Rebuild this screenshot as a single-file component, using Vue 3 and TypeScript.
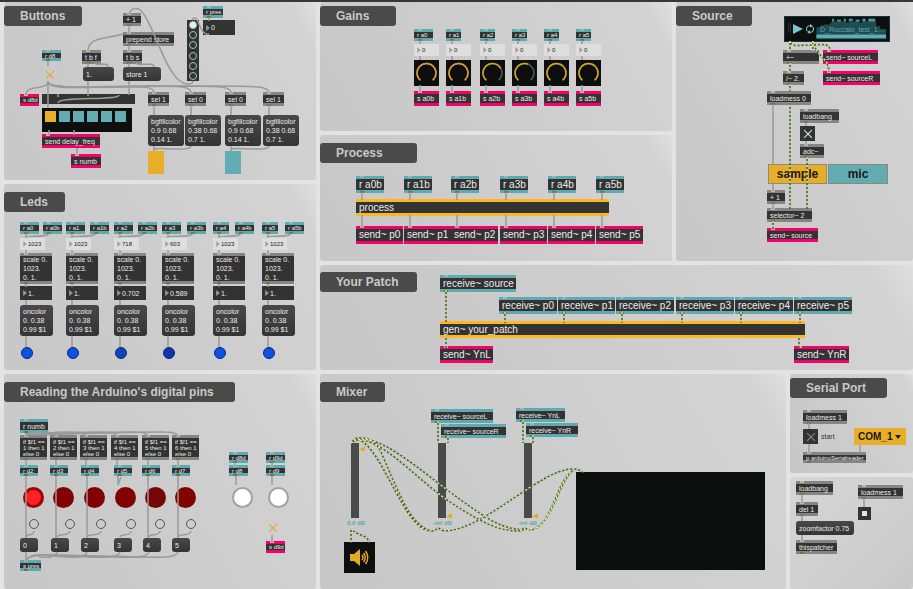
<script setup lang="ts">
import { reactive } from 'vue'

type Kind =
  | 'obj' | 'recv' | 'send' | 'code' | 'msg' | 'num' | 'numlight' | 'toggle' | 'cross' | 'square'
  | 'swatch' | 'led' | 'bang' | 'dial' | 'fader' | 'tab' | 'menu' | 'comment' | 'level'
  | 'bar' | 'matrix' | 'radio' | 'player' | 'speaker' | 'scope'

interface Node {
  k: Kind
  t: string
  x: number
  y: number
  w: number
  h: number
  tone: string
  v: number
}

interface Panel {
  id: string
  title: string
  titleWidth: number
  ox: number
  oy: number
  nodes: Node[]
  wires: string[]
  signals: string[]
}

const n = (k: Kind, t: string, x: number, y: number, w: number, h: number, tone = '', v = 0): Node =>
  ({ k, t, x, y, w, h, tone, v })

const six = [0, 1, 2, 3, 4, 5]
const line = (x: number, a: number, b: number) => `M${x} ${a}V${b}`

/* Buttons */
const colorMessage = ['bgfillcolor\n0.9 0.68\n0.14 1.', 'bgfillcolor\n0.38 0.68\n0.7 1.']
const selX = [148, 185, 225, 263]
const buttons: Panel = {
  id: 'buttons', title: 'Buttons', titleWidth: 78, ox: 4, oy: 2,
  nodes: [
    n('obj', '+ 1', 123, 13, 18, 13),
    n('obj', 'prepend store', 123, 32, 51, 14),
    n('obj', 't b f', 82, 50, 19, 14),
    n('obj', 't b s', 123, 50, 19, 14),
    n('msg', '1.', 83, 67, 31, 14),
    n('msg', 'store 1', 123, 67, 38, 14),
    n('recv', 'r d8', 42, 50, 19, 11, 'tiny'),
    n('cross', 'd8 toggle', 45, 70, 10, 10),
    n('send', 's d8d', 20, 94, 19, 12, 'tiny'),
    n('bar', '', 42, 94, 93, 10),
    n('matrix', '', 42, 108, 90, 24),
    n('send', 'send delay_freq', 42, 134, 58, 14),
    n('send', 's numb', 71, 154, 30, 14),
    ...selX.map((x, i) => n('obj', i === 0 || i === 3 ? 'sel 1' : 'sel 0', x, 92, 21, 14)),
    ...selX.map((x, i) => n('msg', colorMessage[i % 2], x, 115, 36, 31, 'multi')),
    n('swatch', '', 148, 151, 16, 23, 'gold'),
    n('swatch', '', 225, 151, 16, 23, 'teal'),
    n('recv', 'r pres', 203, 6, 20, 12, 'tiny'),
    n('num', '0', 203, 20, 32, 15),
    n('radio', '', 187, 20, 12, 61),
  ],
  wires: [
    'M129 14C131 8 138 6 143 13C156 30 168 84 188 84Q193 84 193 81',
    'M209 34C200 36 199 18 195 18Q193 18 192 20',
    line(209, 17, 21), line(129, 25, 33), line(129, 45, 51),
    line(129, 63, 67), line(129, 81, 95), line(88, 63, 67), line(88, 81, 96),
    'M136 63C138 67 154 61 154 67', 'M95 63C97 67 108 61 108 67',
    'M123 34C105 39 88 37 88 51',
    line(48, 61, 66), line(48, 81, 108),
    'M48 82C46 91 26 84 26 95',
    'M48 82C50 90 80 87 120 87C145 86 154 87 154 93',
    'M48 82C50 90 90 86 150 86C185 86 191 87 191 93',
    'M48 82C50 90 90 86 180 86C225 86 231 87 231 93',
    'M48 82C50 90 90 86 220 86C262 86 269 87 269 93',
    'M58 94V97M58 103C58 96 119 101 119 95',
    line(49, 130, 135), line(74, 130, 135), line(77, 148, 155),
    ...selX.map((x) => line(x + 6, 105, 115)),
    line(154, 146, 151), line(231, 146, 151),
    'M191 146C191 152 158 147 154 149', 'M269 146C269 152 235 147 231 149',
  ],
  signals: [],
}

/* Leds */
const ledX = [20, 66, 114, 162, 213, 262]
const ledBX = [43, 90, 138, 187, 235, 285]
const raw = ['1023', '1023', '718', '603', '1023', '1023']
const scaled = ['1.', '1.', '0.702', '0.589', '1.', '1.']
const blue = ['blue', 'blue', 'blue-mid', 'blue-low', 'blue', 'blue']
const leds: Panel = {
  id: 'leds', title: 'Leds', titleWidth: 61, ox: 4, oy: 184,
  nodes: six.flatMap((i) => [
    n('recv', `r a${i}`, ledX[i], 222, i > 3 ? 16 : 19, 12, 'tiny'),
    n('recv', `r a${i}b`, ledBX[i], 222, 19, 12, 'tiny'),
    n('numlight', raw[i], ledX[i], 238, 25, 12),
    n('obj', 'scale 0.\n1023.\n0. 1.', ledX[i], 253, 32, 31, 'multi'),
    n('num', scaled[i], ledX[i], 286, 32, 14),
    n('msg', 'oncolor\n0. 0.38\n0.99 $1', ledX[i], 305, 33, 31, 'multi'),
    n('led', '', ledX[i] + 1, 347, 12, 12, blue[i]),
  ]),
  wires: six.flatMap((i) => {
    const x = ledX[i] + 6
    return [
      line(x, 233, 238), line(x, 250, 254), line(x, 284, 287), line(x, 300, 305), line(x, 336, 347),
      `M${ledBX[i] + 6} 233C${ledBX[i] + 6} 238 ${x} 235 ${x} 237`,
    ]
  }),
  signals: [],
}

/* Arduino pins */
const ifX = [20, 50, 80, 111, 142, 172]
const pinX = [20, 50, 81, 114, 142, 172]
const bulbX = [33, 63, 94, 125, 155, 185]
const bangX = [34, 70, 101, 131, 160, 191]
const outX = [20, 51, 81, 114, 143, 172]
const pins: Panel = {
  id: 'pins', title: "Reading the Arduino's digital pins", titleWidth: 231, ox: 4, oy: 374,
  nodes: [
    n('recv', 'r numb', 20, 419, 28, 14),
    ...six.flatMap((i) => [
      n('obj', `if $f1 ==\n${i + 1} then 1\nelse 0`, ifX[i], 435, 27, 25, 'tiny multi'),
      n('recv', `r d${i + 2}`, pinX[i], 465, 18, 11, 'tiny'),
      n('led', '', bulbX[i] - 10, 487, 21, 21, i === 0 ? 'red-on' : i === 4 ? 'red-low' : 'red'),
      n('bang', `pin ${i + 2}`, bangX[i] - 5, 519, 10, 10),
      n('msg', String(i), outX[i], 538, 18, 14),
    ]),
    n('recv', 's pres', 20, 560, 21, 11, 'tiny'),
    n('recv', 'r d8d', 229, 452, 19, 11, 'tiny'),
    n('recv', 'r d8', 229, 465, 19, 11, 'tiny'),
    n('recv', 'r d9d', 266, 452, 19, 11, 'tiny'),
    n('recv', 'r d9', 266, 465, 19, 11, 'tiny'),
    n('led', '', 232, 487, 21, 21, 'white'),
    n('led', '', 268, 487, 21, 21, 'white'),
    n('cross', 'd9 toggle', 268, 523, 10, 10),
    n('send', 's d9d', 266, 541, 19, 12, 'tiny'),
  ],
  wires: [
    line(26, 433, 437),
    ...six.slice(1).map((i) => `M26 434C40 436 ${ifX[i] - 30} 431 ${ifX[i] - 8} 432Q${ifX[i] + 6} 432 ${ifX[i] + 6} 437`),
    ...six.map((i) => line(ifX[i] + 6, 459, 466)),
    ...[0, 1, 2, 4, 5].map((i) => line(pinX[i] + 6, 476, 538)),
    'M118 476V485L121 477',
    ...six.map((i) => `M${bangX[i]} 531C${bangX[i] - 1} 537 ${outX[i] + 8} 533 ${outX[i] + 6} 537`),
    line(26, 552, 561),
    ...six.slice(1).map((i) => `M${outX[i] + 6} 552C${outX[i] + 4} 561 ${outX[i] - 24} 556 44 555Q28 555 27 560`),
    line(235, 462, 466), line(272, 462, 466), line(236, 476, 485), line(272, 476, 485), line(272, 535, 542),
  ],
  signals: [],
}

/* Gains */
const gainX = [414, 446, 480, 512, 544, 576]
const gainValue = [1, 1, 0.72, 0.58, 1, 1]
const gains: Panel = {
  id: 'gains', title: 'Gains', titleWidth: 76, ox: 320, oy: 2,
  nodes: six.flatMap((i) => [
    n('recv', `r a${i}`, gainX[i], 29, i === 0 ? 19 : 15, 12, 'tiny'),
    n('numlight', '0', gainX[i], 44, 25, 12),
    n('dial', `gain ${i}`, gainX[i], 60, 25, 26, '', gainValue[i]),
    n('send', `s a${i}b`, gainX[i], 91, 25, 15),
  ]),
  wires: six.flatMap((i) => [line(gainX[i] + 6, 40, 44), line(gainX[i] + 6, 56, 60), line(gainX[i] + 6, 85, 92)]),
  signals: [],
}

/* Process */
const procX = [356, 404, 451, 500, 548, 596]
const process: Panel = {
  id: 'process', title: 'Process', titleWidth: 97, ox: 320, oy: 135,
  nodes: [
    ...six.map((i) => n('recv', `r a${i}b`, procX[i], 176, 28, 17, 'large')),
    n('code', 'process', 356, 199, 253, 17, 'large'),
    ...six.map((i) => n('send', `send~ p${i}`, procX[i], 226, 47, 18, 'large')),
  ],
  wires: six.flatMap((i) => [line(procX[i] + 6, 192, 200), line(procX[i] + 6, 215, 228)]),
  signals: [],
}

/* Your Patch */
const recvX = [499, 558, 616, 676, 735, 794]
const patch: Panel = {
  id: 'patch', title: 'Your Patch', titleWidth: 97, ox: 320, oy: 265,
  nodes: [
    n('recv', 'receive~ source', 440, 275, 76, 17, 'large'),
    ...six.map((i) => n('recv', `receive~ p${i}`, recvX[i], 297, i === 1 ? 57 : 58, 17, 'large')),
    n('code', 'gen~ your_patch', 440, 321, 365, 17, 'large'),
    n('send', 'send~ YnL', 440, 346, 53, 17, 'large'),
    n('send', 'send~ YnR', 794, 346, 55, 17, 'large'),
  ],
  wires: [],
  signals: [line(446, 290, 322), ...recvX.map((x) => line(x + 6, 312, 323)), line(446, 336, 348), line(799, 336, 348)],
}

/* Source */
const source: Panel = {
  id: 'source', title: 'Source', titleWidth: 76, ox: 676, oy: 2,
  nodes: [
    n('player', 'D_Roccato_test_1...', 784, 16, 106, 26),
    n('obj', '+~', 783, 50, 36, 14),
    n('send', 'send~ sourceL', 823, 50, 55, 14),
    n('obj', '/~ 2.', 783, 71, 21, 14),
    n('send', 'send~ sourceR', 823, 71, 57, 14),
    n('obj', 'loadmess 0', 767, 91, 44, 14),
    n('obj', 'loadbang', 800, 109, 39, 14),
    n('toggle', 'adc toggle', 800, 126, 15, 15),
    n('obj', 'adc~', 800, 144, 24, 14),
    n('tab', 'sample', 768, 164, 59, 20, 'gold'),
    n('tab', 'mic', 828, 164, 60, 20, 'teal'),
    n('obj', '+ 1', 767, 190, 18, 14),
    n('obj', 'selector~ 2', 767, 208, 45, 14),
    n('send', 'send~ source', 767, 228, 51, 14),
  ],
  wires: [line(773, 104, 164), line(773, 184, 191), line(773, 203, 209), line(806, 122, 126), line(806, 141, 145)],
  signals: [
    line(790, 41, 51), line(790, 63, 72), line(790, 84, 91), line(790, 105, 209), line(813, 41, 51),
    'M790 41C791 48 800 45 812 45C824 44 830 43 830 51',
    'M814 42C814 56 829 56 829 72',
    line(807, 157, 209), line(773, 221, 229),
  ],
}

/* Mixer */
const mixer: Panel = {
  id: 'mixer', title: 'Mixer', titleWidth: 65, ox: 320, oy: 374,
  nodes: [
    n('recv', 'receive~ sourceL', 431, 409, 62, 14),
    n('recv', 'receive~ sourceR', 441, 424, 65, 14),
    n('recv', 'receive~ YnL', 516, 408, 49, 14),
    n('recv', 'receive~ YnR', 526, 423, 52, 14),
    n('fader', 'output level', 351, 443, 14, 75, '', 0.9),
    n('fader', 'source level', 438, 443, 14, 75, '', 0.01),
    n('fader', 'patch level', 524, 443, 14, 75, '', 0.01),
    n('level', '0.0 dB', 347, 519, 20, 8),
    n('level', '-inf dB', 433, 519, 20, 8),
    n('level', '-inf dB', 518, 519, 20, 8),
    n('speaker', 'audio on', 344, 542, 31, 31),
    n('scope', '', 576, 472, 189, 98),
  ],
  wires: [],
  signals: [
    line(438, 421, 443), line(448, 436, 443), line(523, 420, 443), line(533, 435, 443),
    'M351 443C356 434 374 437 380 450C394 480 410 531 434 531L438 528L444 531',
    'M360 440C384 452 404 528 429 531',
    'M351 443C372 426 420 470 450 492S500 530 524 530',
    'M364 440C392 448 420 482 450 502S500 532 520 531L524 528L530 530',
    'M444 531C484 531 540 469 572 469Q581 469 583 473',
    'M530 530C552 530 556 478 574 470',
    'M536 528C554 518 558 484 572 471',
    line(351, 528, 543), 'M352 529C355 536 369 534 369 543',
  ],
}

/* Serial port */
const serial: Panel = {
  id: 'serial', title: 'Serial Port', titleWidth: 97, ox: 790, oy: 374,
  nodes: [
    n('obj', 'loadmess 1', 803, 410, 44, 14),
    n('toggle', 'start', 803, 429, 15, 15, 'dim'),
    n('comment', 'start', 821, 432, 20, 10),
    n('menu', 'COM_1', 854, 428, 52, 17),
    n('obj', 'p arduinoSerialreader', 803, 452, 63, 11, 'tiny'),
  ],
  wires: [line(809, 423, 429), line(809, 444, 453), line(860, 445, 453)],
  signals: [],
}

const setup: Panel = {
  id: 'setup', title: '', titleWidth: 0, ox: 790, oy: 477,
  nodes: [
    n('obj', 'loadbang', 796, 481, 37, 14),
    n('obj', 'del 1', 796, 502, 22, 14),
    n('msg', 'zoomfactor 0.75', 796, 521, 58, 14),
    n('obj', 'thispatcher', 796, 540, 41, 14),
    n('obj', 'loadmess 1', 858, 485, 45, 14),
    n('square', 'presentation', 858, 507, 13, 13),
  ],
  wires: [line(802, 494, 503), line(802, 515, 521), line(802, 535, 541), line(864, 498, 507)],
  signals: [],
}

const panels = reactive<Panel[]>([buttons, gains, source, leds, process, patch, pins, mixer, serial, setup])

const box = (p: Panel, o: Node) => ({
  left: `${o.x - p.ox}px`,
  top: `${o.y - p.oy}px`,
  width: `${o.w}px`,
  height: `${o.h}px`,
})

/* Dial arc, running clockwise from lower left over 280 degrees */
const arc = (v: number): string => {
  const a0 = (130 * Math.PI) / 180
  const a1 = a0 + (v * 280 * Math.PI) / 180
  const pt = (a: number) => `${12.5 + 9.5 * Math.cos(a)} ${13 + 9.5 * Math.sin(a)}`
  return `M${pt(a0)}A9.5 9.5 0 ${v * 280 > 180 ? 1 : 0} 1 ${pt(a1)}`
}
</script>

<template>
  <main class="patcher">
    <section v-for="p in panels" :key="p.id" class="panel" :class="p.id">
      <h2 v-if="p.title" class="title" :style="{ width: p.titleWidth + 'px' }">{{ p.title }}</h2>

      <template v-for="(o, i) in p.nodes" :key="i">
        <button v-if="o.k === 'msg'" type="button" class="node msg" :class="o.tone" :style="box(p, o)">{{ o.t }}</button>
        <button v-else-if="o.k === 'tab'" type="button" class="node tab" :class="o.tone" :style="box(p, o)">{{ o.t }}</button>
        <button v-else-if="o.k === 'bang'" type="button" class="node bang" :aria-label="o.t" :style="box(p, o)"></button>
        <label v-else-if="o.k === 'num' || o.k === 'numlight'" class="node number" :class="o.k" :style="box(p, o)">
          <svg class="tri" viewBox="0 0 4 6"><path d="M0.5 0.5L3.5 3L0.5 5.5Z" /></svg>
          <input v-model="o.t" type="text" aria-label="number" />
        </label>
        <input v-else-if="o.k === 'toggle'" type="checkbox" checked class="node toggle" :class="o.tone" :id="p.id + '-toggle'" :aria-label="o.t" :style="box(p, o)" />
        <input v-else-if="o.k === 'cross'" type="checkbox" checked class="node cross" :aria-label="o.t" :style="box(p, o)" />
        <input v-else-if="o.k === 'square'" type="checkbox" checked class="node square" :aria-label="o.t" :style="box(p, o)" />
        <label v-else-if="o.k === 'comment'" :for="p.id + '-toggle'" class="node comment" :style="box(p, o)">{{ o.t }}</label>
        <label v-else-if="o.k === 'dial'" class="node dial" :style="box(p, o)">
          <svg viewBox="0 0 25 26">
            <path class="track" :d="arc(1)" />
            <path class="value" :d="arc(o.v)" />
          </svg>
          <input v-model.number="o.v" type="range" min="0" max="1" step="0.01" :aria-label="o.t" />
        </label>
        <label v-else-if="o.k === 'fader'" class="node fader" :style="box(p, o)">
          <svg viewBox="0 0 14 75">
            <rect width="8" height="75" />
            <path :d="`M8 ${74 - o.v * 75}l6 -3v5z`" />
          </svg>
          <input v-model.number="o.v" type="range" min="0" max="1" step="0.01" :aria-label="o.t" />
        </label>
        <div v-else-if="o.k === 'menu'" class="node menu" :style="box(p, o)">
          <select aria-label="Serial port">
            <option>{{ o.t }}</option>
          </select>
          <svg viewBox="0 0 6 4"><path d="M0 0H6L3 4Z" /></svg>
        </div>
        <div v-else-if="o.k === 'matrix'" class="node matrix" :style="box(p, o)">
          <button v-for="c in 6" :key="c" type="button" :class="{ on: c === 1 }" :aria-label="'cell ' + c"></button>
        </div>
        <div v-else-if="o.k === 'radio'" class="node radio" :style="box(p, o)">
          <input v-for="c in 6" :key="c" type="radio" name="preset" :checked="c === 1" :aria-label="'preset ' + c" />
        </div>
        <div v-else-if="o.k === 'player'" class="node player" :style="box(p, o)">
          <svg class="wave" viewBox="0 0 106 26" preserveAspectRatio="none">
            <path class="body" d="M32 24V11H36V9H40V8H46V6H48V2H50V5H54V3H57V5H60V2H62V6H65V2H69V5H72V3H76V6H79V2H82V5H85V2H92V6H93V10H97V13H103V24Z" />
            <path class="peaks" d="M48 5V2H50V5ZM53 5V3H57V5ZM60 5V2H62V5ZM65 4V2H69V4ZM72 5V3H76V5ZM79 5V2H82V5ZM85 5V2H92V5Z" />
            <rect class="base" x="32" y="19" width="71" height="4" />
            <path class="grip" d="M3.500 6V17M5.500 6V17" />
          </svg>
          <button type="button" aria-label="play"><svg viewBox="0 0 10 12"><path class="fill" d="M0 1L10 6L0 11Z" /></svg></button>
          <button type="button" aria-label="loop">
            <svg viewBox="0 0 12 12">
              <path class="ring" d="M2.600 8.500A4 4 0 0 1 6.500 2.100M9.400 3.500A4 4 0 0 1 5.500 9.900" />
              <path class="fill" d="M6 0L9.500 2.300L6 4.500ZM6 7.500L2.500 9.700L6 12Z" />
            </svg>
          </button>
          <span>{{ o.t }}</span>
        </div>
        <button v-else-if="o.k === 'speaker'" type="button" class="node speaker" :aria-label="o.t" :style="box(p, o)">
          <svg viewBox="0 0 31 31">
            <path class="fill" d="M6 12H10L16 7V24L10 19H6Z" />
            <path class="ring" d="M18 13Q20 15.500 18 18M19.500 11Q23 15.500 19.500 20M21.500 9Q26 15.500 21.500 22" />
          </svg>
        </button>
        <div v-else class="node" :class="[o.k, o.tone]" :style="box(p, o)">{{ o.t }}</div>
      </template>

      <svg class="wires" aria-hidden="true">
        <g :transform="`translate(${-p.ox} ${-p.oy})`">
          <path v-for="(d, i) in p.wires" :key="'w' + i" class="wire" :d="d" />
          <path v-for="(d, i) in p.signals" :key="'s' + i" class="signal" :d="d" />
          <path v-for="(d, i) in p.signals" :key="'d' + i" class="dash" :d="d" />
        </g>
      </svg>
    </section>
  </main>
</template>

<style>
body {
  background: #e3e3e3;
}
</style>

<style scoped>
.patcher {
  box-sizing: border-box;
  min-height: 100vh;
  display: grid;
  gap: 4px;
  grid-template-columns: 312fr 352fr 110fr 123fr;
  grid-template-rows: 129fr 45fr 77fr 105fr 99fr 112fr;
  grid-template-areas:
    'buttons gains source source'
    'buttons process source source'
    'leds process source source'
    'leds patch patch patch'
    'pins mixer mixer serial'
    'pins mixer mixer setup';
  padding-left: 4px;
  border-top: 2px solid #383638;
  background: #e3e3e3;
  overflow: hidden;
  font-family: 'Liberation Sans', Arial, sans-serif;
  font-size: 7px;
  line-height: 9px;
  color: #ececec;
}

.panel {
  position: relative;
  border-radius: 3px;
  background: linear-gradient(60deg, #c7c7c7 0%, #cdcdcd 50%, #d3d3d3 93%, #dfdfdf 100%);
}
.buttons { grid-area: buttons; }
.gains { grid-area: gains; }
.source { grid-area: source; }
.leds { grid-area: leds; }
.process { grid-area: process; }
.patch { grid-area: patch; }
.pins { grid-area: pins; }
.mixer { grid-area: mixer; }
.serial { grid-area: serial; }
.setup { grid-area: setup; }

.buttons, .gains, .source, .serial { padding-top: 4px; }
.leds, .process, .pins, .mixer { padding-top: 8px; }
.patch { padding-top: 7px; }
.setup {
  background: linear-gradient(135deg, #d6d6d6, #c9c9c9);
}

.title {
  box-sizing: border-box;
  margin: 0;
  padding: 0 0 0 16px;
  border-radius: 3px;
  background: #4a4a4a;
  color: #c9c9c9;
  font-size: 12px;
  font-weight: bold;
  line-height: 20px;
  white-space: nowrap;
}

.node {
  position: absolute;
  box-sizing: border-box;
  margin: 0;
  font-family: inherit;
  font-size: 7px;
  line-height: 9px;
  white-space: pre;
}

.obj, .recv, .send, .code {
  display: flex;
  align-items: center;
  padding-left: 3px;
  border-style: solid;
  border-width: 3px 0;
  background: #333;
  border-color: #858585;
}
.obj::before, .recv::before, .send::before, .obj::after, .recv::after {
  content: '';
  position: absolute;
  left: 4px;
  width: 4px;
  height: 2px;
}
.obj::before, .send::before { top: -3px; background: #c9b0a8; }
.recv::before { top: -3px; background: #8fb9bb; }
.obj::after, .recv::after { bottom: -3px; background: #6d7a35; }
.recv { border-color: #5dabb1; }
.send { border-color: #f7006c; }
.code { border-color: #fdb81b; }
.multi { line-height: 9px; }
.tiny { font-size: 6px; line-height: 6px; }
.large { font-size: 10px; line-height: 12px; }

.msg {
  padding: 0 0 0 3px;
  border: 0;
  border-radius: 3px;
  background: linear-gradient(#484848, #343434);
  color: #ececec;
  text-align: left;
}

.number {
  display: flex;
  align-items: center;
  gap: 1px;
  padding-left: 3px;
}
.number input {
  flex: 1;
  min-width: 0;
  padding: 0;
  border: 0;
  background: none;
  color: inherit;
  font: inherit;
}
.num { background: #333; color: #ececec; }
.numlight { background: #dedede; color: #222; font-size: 6px; }
.tri { flex: none; width: 4px; height: 6px; fill: #999; stroke: #aaa; stroke-width: 0.5; }

.toggle, .cross, .square { appearance: none; }
.toggle { background: #333; color: #cfe8ee; }
.toggle.dim { color: #888; }
.cross { color: #e8a820; }
.toggle::before, .toggle::after, .cross::before, .cross::after {
  content: '';
  position: absolute;
  left: 50%;
  top: 50%;
  width: 11px;
  height: 1px;
  background: currentColor;
  transform: translate(-50%, -50%) rotate(45deg);
}
.toggle::after, .cross::after { transform: translate(-50%, -50%) rotate(-45deg); }
.square { border: 4px solid #333; background: #cfe8ee; }

.gold { background: #e8ae27; }
.teal { background: #62adb4; }

.led { border-radius: 50%; }
.blue { background: #0754e0; border: 1px solid #1c1c8a; }
.blue-mid { background: #0a46b8; border: 1px solid #1c1c8a; }
.blue-low { background: #0939a2; border: 1px solid #1c1c8a; }
.red { background: #820202; }
.red-low { background: #740808; }
.red-on { background: #ff2020; border: 3px solid #9c0606; }
.white { background: #fff; border: 2px solid #a0a0a0; }
.bang { padding: 0; border: 1px solid #555; border-radius: 50%; background: none; }

.bar { background: #333; }
.matrix {
  display: flex;
  gap: 3px;
  padding: 3px;
  background: #0c0f0e;
}
.matrix button { width: 11px; height: 11px; padding: 0; border: 0; background: #62adb4; }
.matrix button.on { background: #e8ae27; }
.radio {
  display: flex;
  flex-direction: column;
  align-items: center;
  justify-content: space-around;
  background: #333;
}
.radio input {
  appearance: none;
  box-sizing: border-box;
  width: 8px;
  height: 8px;
  margin: 0;
  border: 1px solid #9fc3c8;
  border-radius: 50%;
}
.radio input:checked { background: #dff2f5; }

.dial { background: #0c0f0e; }
.dial svg, .fader svg, .speaker svg { display: block; width: 100%; height: 100%; fill: none; stroke-width: 1.5; }
.dial .track { stroke: #555; }
.dial .value { stroke: #dfa325; }
.dial input, .fader input {
  position: absolute;
  inset: 0;
  width: 100%;
  height: 100%;
  margin: 0;
  opacity: 0;
}
.fader input { writing-mode: vertical-lr; direction: rtl; }
.fader rect { fill: #4a4a4a; }
.fader path { fill: #e8a820; }
.level { color: #5aa9b0; font-size: 6px; font-weight: bold; line-height: 8px; }

.tab {
  padding: 0;
  border: 1px solid #8b8b78;
  color: #181818;
  font-size: 12px;
  font-weight: bold;
  line-height: 18px;
  text-align: center;
}
.comment { color: #333; }
.menu { display: flex; align-items: center; padding-left: 4px; background: #e8ae27; }
.menu select {
  appearance: none;
  padding: 0;
  border: 0;
  background: none;
  color: #181818;
  font: bold 10px/14px 'Liberation Sans', Arial, sans-serif;
}
.menu svg { width: 6px; height: 4px; margin-left: 2px; fill: #181818; }

.player { display: flex; align-items: center; gap: 2px; padding-left: 8px; background: #0c0f0e; border: 1px solid #12363a; color: #5dabb1; }
.wave { position: absolute; inset: 0; width: 100%; height: 100%; }
.body { fill: #1e4c50; }
.peaks { fill: #4f979d; }
.base { fill: #62adb4; }
.grip { stroke: #333; fill: none; }
.player button { position: relative; flex: none; width: 10px; height: 12px; padding: 0; border: 0; background: none; }
.player button svg { display: block; width: 100%; height: 100%; }
.player button .fill { fill: #7cc4ca; }
.player .ring { fill: none; stroke: #7cc4ca; stroke-width: 1.3; }
.player span { position: relative; margin-left: 3px; }

.speaker { padding: 0; border: 0; background: #0c0f0e; }
.speaker .fill { fill: #e8a820; }
.speaker .ring { stroke: #e8a820; }
.scope { background: #0c0f0e; }

.wires {
  position: absolute;
  inset: 0;
  width: 100%;
  height: 100%;
  overflow: visible;
  pointer-events: none;
  fill: none;
}
.wire { stroke: #9a9a9a; stroke-width: 1.5; }
.signal { stroke: #505446; stroke-width: 1.5; }
.dash { stroke: #d2ef92; stroke-width: 1.5; stroke-dasharray: 2 2; }
</style>
